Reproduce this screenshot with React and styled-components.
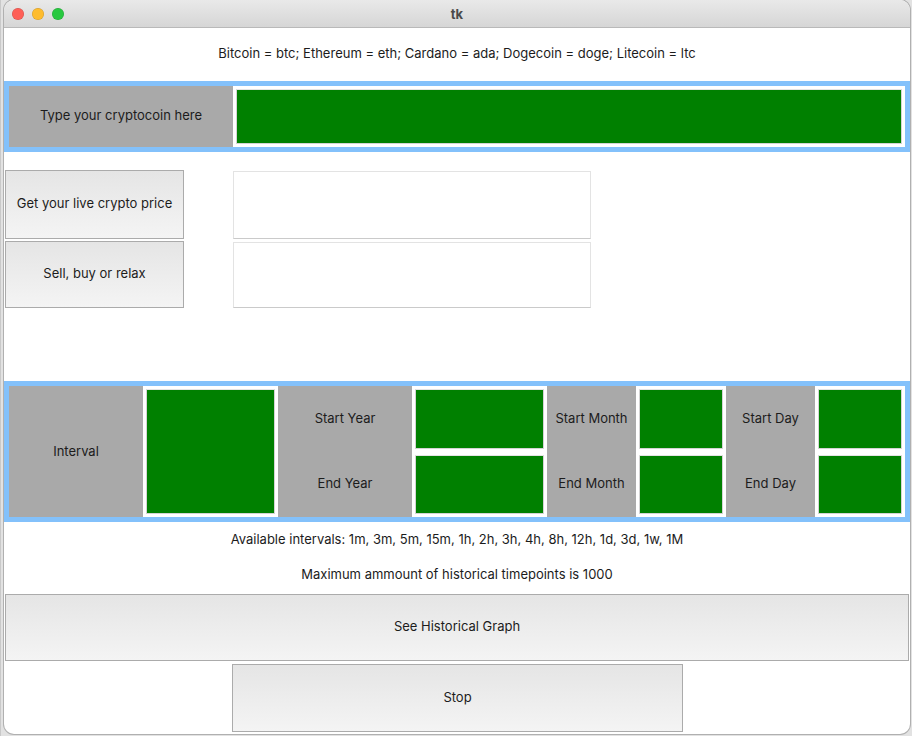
import React from "react";
import styled, { createGlobalStyle } from "styled-components";

const GlobalStyle = createGlobalStyle`
  html, body {
    margin: 0;
    padding: 0;
    background: #d9d9d9;
  }
  body {
    font-family: Inter, "Noto Sans", "Liberation Sans", sans-serif;
    font-size: 13px;
    color: #1c1c1c;
  }
`;

const Desktop = styled.div`
  width: 912px;
  height: 736px;
  padding-left: 4px;
  box-sizing: border-box;
  overflow: hidden;
  background: linear-gradient(90deg, #c9c9c9 0 1px, #e2e2e2 1px);
`;

const Window = styled.div`
  width: 906px;
  height: 734px;
  background: #fff;
  border-radius: 10px;
  overflow: hidden;
  box-shadow: 0 0 0 1px rgba(0, 0, 0, 0.22);
  display: flex;
  flex-direction: column;
`;

const TitleBar = styled.div`
  height: 27px;
  flex: none;
  display: flex;
  align-items: center;
  justify-content: center;
  position: relative;
  background: linear-gradient(#e9e9e9, #d6d6d6);
  border-bottom: 1px solid #b9b9b9;
  font-weight: 700;
  color: #4a4a4a;
`;

const Lights = styled.div`
  position: absolute;
  left: 8px;
  top: 8px;
  display: flex;
  gap: 8px;
`;

const Light = styled.span`
  width: 12px;
  height: 12px;
  border-radius: 50%;
  background: ${(p) => p.color};
  box-shadow: inset 0 0 0 0.5px rgba(0, 0, 0, 0.18);
`;

const Body = styled.div`
  display: flex;
  flex-direction: column;
  align-items: flex-start;
`;

const Info = styled.div`
  align-self: stretch;
  text-align: center;
  line-height: 17px;
  padding: ${(p) => p.pad || "0"};
`;

const Frame = styled.div`
  width: 906px;
  box-sizing: border-box;
  border: 5px solid #83c1fb;
  background: #a9a9a9;
  display: grid;
  grid-template-columns: ${(p) => p.cols};
  grid-template-rows: ${(p) => p.rows};
  margin-top: ${(p) => p.top || 0}px;
`;

const Label = styled.div`
  display: flex;
  align-items: center;
  justify-content: center;
  padding-bottom: ${(p) => p.lift || 2}px;
  background: #a9a9a9;
  grid-row: ${(p) => (p.tall ? "span 2" : "auto")};
`;

const EntryCell = styled.div`
  background: #fff;
  padding: 3px;
  grid-row: ${(p) => (p.tall ? "span 2" : "auto")};
`;

const Field = styled.input`
  display: block;
  width: 100%;
  height: 100%;
  box-sizing: border-box;
  margin: 0;
  padding: 0;
  border: 1px solid #d4d4d4;
  border-top-color: #e4e4e4;
  background: #008000;
  outline: none;
`;

const Controls = styled.div`
  display: grid;
  grid-template-columns: 179px 358px;
  grid-template-rows: 69px 67px;
  column-gap: 49px;
  row-gap: 2px;
  margin: 18px 0 0 1px;
`;

const Button = styled.button`
  width: ${(p) => p.w || "100%"};
  height: ${(p) => p.h || "100%"};
  margin: ${(p) => p.m || "0"};
  box-sizing: border-box;
  border: 1px solid #ababab;
  background: linear-gradient(#e5e5e5, #f4f4f4);
  font: inherit;
  color: #1c1c1c;
  padding: 0 0 3px;
`;

const Output = styled.div`
  border: 1px solid #e3e3e3;
  border-bottom-color: #cacaca;
  background: #fff;
  margin-top: ${(p) => p.shift || 0}px;
`;

export default function App() {
  const top = ["Start Year", "Start Month", "Start Day"];
  const bottom = ["End Year", "End Month", "End Day"];

  return (
    <>
      <GlobalStyle />
      <Desktop>
        <Window>
          <TitleBar>
            <Lights>
              <Light color="#fe5f57" />
              <Light color="#febc2e" />
              <Light color="#28c840" />
            </Lights>
            tk
          </TitleBar>
          <Body>
            <Info pad="17px 0 19px">
              Bitcoin = btc; Ethereum = eth; Cardano = ada; Dogecoin = doge; Litecoin = ltc
            </Info>

            <Frame cols="224px 672px" rows="61px">
              <Label lift={4}>Type your cryptocoin here</Label>
              <EntryCell>
                <Field readOnly />
              </EntryCell>
            </Frame>

            <Controls>
              <Button>Get your live crypto price</Button>
              <Output shift={1} />
              <Button>Sell, buy or relax</Button>
              <Output shift={1} />
            </Controls>

            <Frame
              top={73}
              cols="134px 135px 134px 135px 89px 90px 89px 90px"
              rows="66px 65px"
            >
              <Label tall>Interval</Label>
              <EntryCell tall>
                <Field readOnly />
              </EntryCell>
              {top.map((t) => (
                <React.Fragment key={t}>
                  <Label>{t}</Label>
                  <EntryCell>
                    <Field readOnly />
                  </EntryCell>
                </React.Fragment>
              ))}
              {bottom.map((t) => (
                <React.Fragment key={t}>
                  <Label lift={4}>{t}</Label>
                  <EntryCell>
                    <Field readOnly />
                  </EntryCell>
                </React.Fragment>
              ))}
            </Frame>

            <Info pad="9px 0 0">
              Available intervals: 1m, 3m, 5m, 15m, 1h, 2h, 3h, 4h, 8h, 12h, 1d, 3d, 1w, 1M
            </Info>
            <Info pad="18px 0 0">
              Maximum ammount of historical timepoints is 1000
            </Info>

            <Button w="904px" h="67px" m="11px 0 0 1px">
              See Historical Graph
            </Button>
            <Button w="451px" h="68px" m="3px 0 0 228px">
              Stop
            </Button>
          </Body>
        </Window>
      </Desktop>
    </>
  );
}
